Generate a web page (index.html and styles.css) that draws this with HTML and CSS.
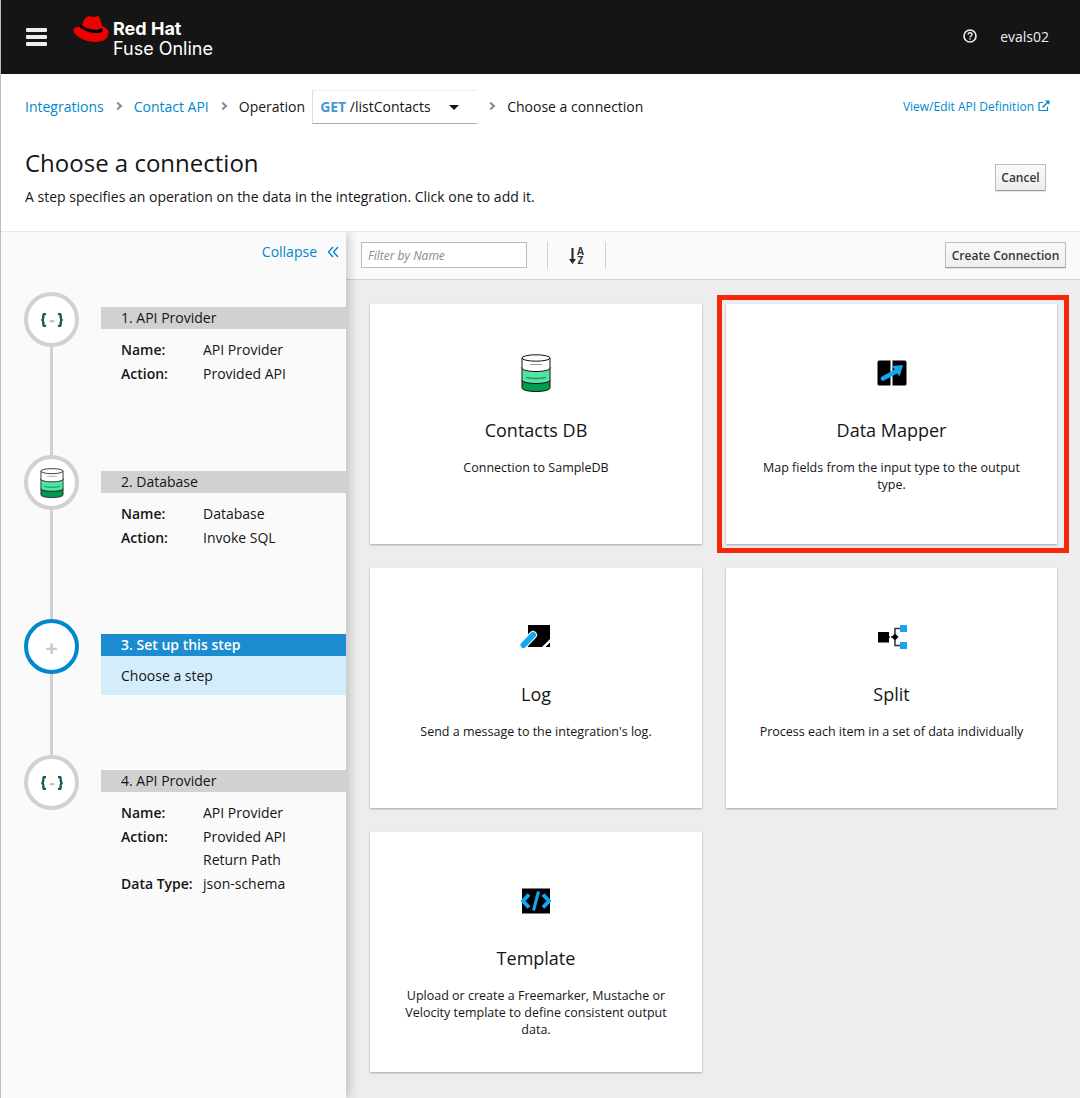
FILE: index.html
```html
<!DOCTYPE html>
<html>
<head>
    <title>Fuse Online</title>
    <link rel="stylesheet" href="styles.css">
</head>
<body>
    <header class="masthead">
        <div class="burger"><span></span><span></span><span></span></div>
        <svg class="hat" viewBox="0 0 36 28" width="36" height="28">
            <path fill="#e00" d="M15 1.500c2-1 4 .5 6 .5s3-1.500 4.500-.8c1.500 .8 2.500 6 3.500 9.800 2.500 1 6.500 3 6.500 6.500 0 4-5 6.500-10 6.500C17 24 6 19 6 14.500c0-.6 .2-1.200 .5-1.700L9.500 9c.8-3 2-6.500 5.500-7.500z"/>
            <path fill="#e00" d="M6.800 11.500C3 12 .5 13 .5 15.500c0 4.500 10 11 20.500 11.500 7 .3 13-2 14.500-7-3 3-8 4-12 3.800C14 23 7 18 6.800 11.500z"/>
            <path fill="#000" d="M8.300 9.800c3 2.500 8 4.500 13 5 3 .3 6-.2 7.500-1.700l1 3.200c-2 1.700-5.500 2-8.500 1.700-6-.5-12-3.200-15-6.200z"/>
        </svg>
        <div class="brand">
            <div class="brand-top">Red Hat</div>
            <div class="brand-bottom">Fuse Online</div>
        </div>
        <div class="masthead-right">
            <svg class="help" viewBox="0 0 14 14" width="14" height="14">
                <circle cx="7" cy="7" r="6" fill="none" stroke="#eee" stroke-width="1.600"/>
                <path d="M5.100 5.500c0-2.400 3.900-2.400 3.900 0 0 1.500-2 1.500-2 3" fill="none" stroke="#eee" stroke-width="1.400"/>
                <rect x="6.300" y="9.300" width="1.400" height="1.400" fill="#eee"/>
            </svg>
            <span class="user">evals02</span>
        </div>
    </header>

    <div class="page-head">
        <div class="crumbs">
            <a class="link">Integrations</a>
            <span class="chev"></span>
            <a class="link">Contact API</a>
            <span class="chev"></span>
            <span class="crumb-text">Operation</span>
            <div class="op-select">
                <span class="op-label"><b>GET</b> /listContacts</span>
                <span class="caret"></span>
            </div>
            <span class="chev"></span>
            <span class="crumb-text">Choose a connection</span>
            <a class="link api-link">View/Edit API Definition
                <svg viewBox="0 0 12 12" width="12" height="12">
                    <path d="M9.500 7v3.500h-8.500v-8h4" fill="none" stroke="#0088ce" stroke-width="1.200"/>
                    <path d="M4.500 7.500L10 2" fill="none" stroke="#0088ce" stroke-width="1.400"/>
                    <path d="M7 .6h4.500v4.500z" fill="#0088ce"/>
                </svg>
            </a>
        </div>
        <div class="title-row">
            <div>
                <h1>Choose a connection</h1>
                <p class="lead">A step specifies an operation on the data in the integration. Click one to add it.</p>
            </div>
            <button class="btn cancel">Cancel</button>
        </div>
    </div>

    <div class="main">
        <aside class="sidebar">
            <div class="collapse">
                <a class="link">Collapse</a>
                <svg viewBox="0 0 12 12" width="12" height="12">
                    <path d="M6 1L1.500 6 6 11M11 1L6.500 6 11 11" fill="none" stroke="#0088ce" stroke-width="1.400"/>
                </svg>
            </div>

            <div class="step step-1">
                <div class="track">
                    <div class="circle">
                        <svg viewBox="0 0 24 14" width="24" height="14">
                            <path class="brace" d="M6 1H4.700C3.600 1 3.300 1.500 3.300 2.500V5c0 1-.5 1.700-1.800 2 1.300 .3 1.800 1 1.800 2v2.500c0 1 .3 1.500 1.400 1.500H6M18 1h1.300c1.100 0 1.400 .5 1.400 1.500V5c0 1 .5 1.700 1.800 2-1.300 .3-1.800 1-1.800 2v2.500c0 1-.3 1.500-1.400 1.500H18"/>
                            <text x="12" y="8.500" class="api-text">api</text>
                        </svg>
                    </div>
                    <div class="line"></div>
                </div>
                <div class="step-body">
                    <div class="step-title">1. API Provider</div>
                    <dl class="props">
                        <dt>Name:</dt><dd>API Provider</dd>
                        <dt>Action:</dt><dd>Provided API</dd>
                    </dl>
                </div>
            </div>

            <div class="step step-2">
                <div class="track">
                    <div class="circle">
                        <svg viewBox="0 0 30 38" width="24" height="30">
                            <use href="#db"/>
                        </svg>
                    </div>
                    <div class="line"></div>
                </div>
                <div class="step-body">
                    <div class="step-title">2. Database</div>
                    <dl class="props">
                        <dt>Name:</dt><dd>Database</dd>
                        <dt>Action:</dt><dd>Invoke SQL</dd>
                    </dl>
                </div>
            </div>

            <div class="step step-3">
                <div class="track">
                    <div class="circle circle-active"><span class="plus">+</span></div>
                    <div class="line"></div>
                </div>
                <div class="step-body">
                    <div class="step-title step-title-active">3. Set up this step</div>
                    <div class="step-hint">Choose a step</div>
                </div>
            </div>

            <div class="step step-4">
                <div class="track">
                    <div class="circle">
                        <svg viewBox="0 0 24 14" width="24" height="14">
                            <path class="brace" d="M6 1H4.700C3.600 1 3.300 1.500 3.300 2.500V5c0 1-.5 1.700-1.800 2 1.300 .3 1.800 1 1.800 2v2.500c0 1 .3 1.500 1.400 1.500H6M18 1h1.300c1.100 0 1.400 .5 1.400 1.500V5c0 1 .5 1.700 1.800 2-1.300 .3-1.800 1-1.800 2v2.500c0 1-.3 1.500-1.400 1.500H18"/>
                            <text x="12" y="8.500" class="api-text">api</text>
                        </svg>
                    </div>
                </div>
                <div class="step-body">
                    <div class="step-title">4. API Provider</div>
                    <dl class="props">
                        <dt>Name:</dt><dd>API Provider</dd>
                        <dt>Action:</dt><dd>Provided API<br>Return Path</dd>
                        <dt>Data Type:</dt><dd>json-schema</dd>
                    </dl>
                </div>
            </div>
        </aside>

        <section class="content">
            <div class="toolbar">
                <input class="filter" type="text" placeholder="Filter by Name">
                <div class="sort">
                    <svg viewBox="0 0 7 16" width="7" height="16">
                        <path d="M3.500 0v12" stroke="#222" stroke-width="2"/>
                        <path d="M0 11h7l-3.500 5z" fill="#222"/>
                    </svg>
                    <span class="az">A<br>Z</span>
                </div>
                <button class="btn create">Create Connection</button>
            </div>
            <div class="cards">
                <div class="card">
                    <svg class="card-icon" viewBox="0 0 30 38" width="30" height="38">
                        <g id="db">
                            <path d="M1 26v8c0 2 6 3.500 14 3.500S29 36 29 34v-8z" fill="#009a50" stroke="#111"/>
                            <path d="M1 13v13c0 2 6 3.500 14 3.500S29 28 29 26V13z" fill="#55e3a5" stroke="#111"/>
                            <path d="M5 23.500c5 1.200 15 1.200 20 0" fill="none" stroke="#0a7a46"/>
                            <path d="M1 4v10c0 2 6 3.500 14 3.500S29 16 29 14V4z" fill="#fff" stroke="#111"/>
                            <ellipse cx="15" cy="4" rx="14" ry="3.200" fill="#fff" stroke="#111"/>
                            <path d="M9 10.500h12" stroke="#999"/>
                        </g>
                    </svg>
                    <h2>Contacts DB</h2>
                    <p>Connection to SampleDB</p>
                </div>
                <div class="card card-marked">
                    <svg class="card-icon" viewBox="0 0 30 26" width="30" height="26">
                        <path d="M.5 2A1.500 1.500 0 0 1 2 .5H13.500V25.500H2A1.500 1.500 0 0 1 .5 24zM15.500 .5H28A1.500 1.500 0 0 1 29.500 2V24A1.500 1.500 0 0 1 28 25.500H15.500z" fill="#000"/>
                        <path d="M6 18.500L19 11.500" stroke="#12a7ef" stroke-width="4.600" stroke-linecap="round"/>
                        <path d="M15 6L26 5 22.500 16.500z" fill="#12a7ef"/>
                    </svg>
                    <h2>Data Mapper</h2>
                    <p>Map fields from the input type to the output type.</p>
                </div>
                <div class="card">
                    <svg class="card-icon" viewBox="0 0 32 26" width="32" height="26">
                        <path d="M8 1H30V23H8z" fill="#000"/>
                        <path d="M22 23L30 15V23z" fill="#fff"/>
                        <path d="M25.500 23L30 18.500V23z" fill="#000"/>
                        <path d="M3.500 21L13 11" stroke="#fff" stroke-width="8" stroke-linecap="round"/>
                        <path d="M3.500 21L13 11" stroke="#12a7ef" stroke-width="6" stroke-linecap="round"/>
                    </svg>
                    <h2>Log</h2>
                    <p>Send a message to the integration's log.</p>
                </div>
                <div class="card">
                    <svg class="card-icon" viewBox="0 0 30 26" width="30" height="26">
                        <rect x="1" y="8" width="11" height="10.500" fill="#000"/>
                        <path d="M12 13h3" stroke="#333" stroke-width="1.400" stroke-dasharray="1 1"/>
                        <path d="M18 9.500l3.500 3.500-3.500 3.500-3.500-3.500z" fill="#000"/>
                        <path d="M18 10V4.500h5M18 16v5.500h5" fill="none" stroke="#333" stroke-width="1.500"/>
                        <rect x="23" y="1" width="7" height="7" fill="#12a7ef"/>
                        <rect x="23" y="18" width="7" height="7" fill="#12a7ef"/>
                    </svg>
                    <h2>Split</h2>
                    <p>Process each item in a set of data individually</p>
                </div>
                <div class="card">
                    <svg class="card-icon" viewBox="0 0 30 26" width="30" height="26">
                        <rect x="1" y="0.500" width="28" height="25" fill="#000"/>
                        <path d="M8 6.500L2 13l6 6.500M22 6.500L28 13l-6 6.500" fill="none" stroke="#12a7ef" stroke-width="4"/>
                        <path d="M17.500 3.500L12.500 22.500" stroke="#12a7ef" stroke-width="3"/>
                    </svg>
                    <h2>Template</h2>
                    <p>Upload or create a Freemarker, Mustache or Velocity template to define consistent output data.</p>
                </div>
            </div>
        </section>
    </div>
</body>
</html>
```

FILE: styles.css
```css
* {
    box-sizing: border-box;
}
html, body {
    height: 100%;
}
body {
    margin: 0;
    font-family: "Open Sans", sans-serif;
    font-size: 14px;
    color: #151515;
    background-color: #fff;
    border-left: 1px solid #bbb;
    display: flex;
    flex-direction: column;
    overflow: hidden;
}
.link {
    color: #0088ce;
}

.masthead {
    height: 74px;
    background-color: #151515;
    display: flex;
    align-items: center;
    padding-left: 25px;
    flex-shrink: 0;
}
.burger {
    width: 21px;
    margin-right: 26px;
    margin-top: 2px;
}
.burger span {
    display: block;
    height: 4px;
    margin-bottom: 3px;
    background-color: #eee;
    border-radius: 1px;
}
.hat {
    margin-right: 4px;
    margin-top: -16px;
}
.brand {
    color: #fff;
    margin-top: 4px;
}
.brand-top {
    font-family: Inter, sans-serif;
    font-size: 18px;
    font-weight: 700;
    line-height: 20px;
    letter-spacing: 0;
}
.brand-bottom {
    font-family: Inter, sans-serif;
    font-size: 18px;
    line-height: 20px;
    letter-spacing: 0;
}
.masthead-right {
    margin-left: auto;
    display: flex;
    align-items: center;
    padding-right: 31px;
    padding-bottom: 2px;
}
.help {
    margin-right: 23px;
}
.user {
    font-size: 14px;
    color: #eee;
}

.page-head {
    height: 158px;
    padding: 15px 30px 0 24px;
    flex-shrink: 0;
    border-bottom: 1px solid #e8e8e8;
}
.crumbs {
    display: flex;
    align-items: center;
    height: 34px;
}
.chev {
    width: 6px;
    height: 6px;
    border-top: 2px solid #8a8d90;
    border-right: 2px solid #8a8d90;
    transform: rotate(45deg);
    margin: 0 13px 0 11px;
}
.crumb-text {
    white-space: nowrap;
}
.op-select {
    width: 165px;
    height: 34px;
    margin: 1px 0 0 7px;
    padding: 0 18px 0 7px;
    display: flex;
    align-items: center;
    justify-content: space-between;
    border-left: 1px solid #ddd;
    border-top: 1px solid #eee;
    border-bottom: 1px solid #aaa;
}
.op-label b {
    color: #4a96d2;
    font-weight: 700;
}
.caret {
    margin-top: 1px;
    border-left: 5px solid transparent;
    border-right: 5px solid transparent;
    border-top: 5px solid #151515;
}
.api-link {
    margin-left: auto;
    font-size: 12px;
    display: flex;
    align-items: center;
    gap: 4px;
}
.title-row {
    display: flex;
    justify-content: space-between;
    align-items: flex-start;
    margin-top: 24px;
}
h1 {
    margin: 0;
    font-size: 24px;
    font-weight: 400;
    line-height: 32px;
}
.lead {
    margin: 8px 0 0;
    font-size: 14px;
    line-height: 19px;
}
.btn {
    font-family: "Open Sans", sans-serif;
    font-size: 12px;
    font-weight: 600;
    white-space: nowrap;
    color: #363636;
    padding: 0;
    background: linear-gradient(#fafafa, #ededed);
    border: 1px solid #bbb;
    border-bottom-color: #999;
    border-radius: 1px;
    box-shadow: 0 1px 1px rgba(0, 0, 0, 0.1);
}
.cancel {
    width: 51px;
    height: 27px;
    margin: 17px 4px 0 0;
}

.main {
    flex: 1;
    display: flex;
    min-height: 0;
}
.sidebar {
    width: 345px;
    flex-shrink: 0;
    background-color: #fafafa;
    position: relative;
    box-shadow: 3px 0 10px rgba(0, 0, 0, 0.2);
    clip-path: inset(0 -20px 0 0);
}
.collapse {
    height: 60px;
    padding: 10px 7px 0 0;
    display: flex;
    justify-content: flex-end;
    line-height: 20px;
}
.collapse svg {
    margin: 4px 0 0 10px;
}
.step {
    display: flex;
}
.step-1 {
    height: 163px;
}
.step-2 {
    height: 164px;
}
.step-3 {
    height: 136px;
}
.track {
    width: 100px;
    padding-left: 23px;
    display: flex;
    flex-direction: column;
    flex-shrink: 0;
}
.circle {
    width: 55px;
    height: 55px;
    flex-shrink: 0;
    border: 4px solid #d1d1d1;
    border-radius: 50%;
    background-color: #fff;
    display: flex;
    align-items: center;
    justify-content: center;
}
.circle-active {
    border-color: #0088ce;
}
.plus {
    color: #c8c8c8;
    font-size: 22px;
    font-weight: 700;
    line-height: 22px;
}
.line {
    flex: 1;
    width: 3px;
    margin-left: 26px;
    background-color: #d1d1d1;
}
.brace {
    fill: none;
    stroke: #0f5e5e;
    stroke-width: 2.300;
}
.api-text {
    font-size: 3.500px;
    fill: #555;
    text-anchor: middle;
}
.step-body {
    flex: 1;
    padding-top: 15px;
}
.step-2 .step-body {
    padding-top: 16px;
}
.step-title {
    height: 22px;
    padding-left: 20px;
    line-height: 22px;
    background-color: #d1d1d1;
}
.step-title-active {
    background-color: #1a8ccf;
    color: #fff;
    font-weight: 600;
}
.step-hint {
    height: 39px;
    padding-left: 20px;
    line-height: 39px;
    background-color: #d4edfa;
}
.props {
    margin: 9px 0 0 20px;
    display: grid;
    grid-template-columns: 82px 1fr;
    line-height: 23.500px;
}
.props dt {
    font-weight: 600;
}
.props dd {
    margin: 0;
}

.content {
    flex: 1;
    min-width: 0;
    background-color: #ededed;
}
.toolbar {
    height: 48px;
    padding: 10px 14px 0 15px;
    display: flex;
    align-items: flex-start;
    background-color: #fafafa;
    border-bottom: 1px solid #d1d1d1;
}
.filter {
    width: 166px;
    height: 26px;
    padding: 0 6px;
    font-family: "Open Sans", sans-serif;
    font-size: 12px;
    border: 1px solid #bbb;
}
.filter::placeholder {
    font-style: italic;
    color: #8a8a8a;
}
.sort {
    width: 59px;
    height: 27px;
    margin-left: 20px;
    display: flex;
    align-items: center;
    justify-content: center;
    gap: 1px;
    border-left: 1px solid #d1d1d1;
    border-right: 1px solid #d1d1d1;
}
.az {
    font-size: 10px;
    font-weight: 700;
    line-height: 9px;
    color: #333;
    text-align: center;
}
.create {
    margin-left: auto;
    width: 121px;
    height: 26px;
}
.cards {
    display: grid;
    grid-template-columns: 332px 331px;
    grid-auto-rows: 240px;
    gap: 24px;
    padding: 24px 0 0 24px;
}
.card {
    background-color: #fff;
    box-shadow: 0 1px 2px rgba(0, 0, 0, 0.3);
    text-align: center;
    display: flex;
    flex-direction: column;
    align-items: center;
    padding: 50px 30px 0;
}
.card-marked {
    position: relative;
}
.card-marked::after {
    content: "";
    position: absolute;
    inset: -9px -12px -9px -9px;
    border: 5px solid #f5260a;
}
.card-icon {
    height: 38px;
    flex-shrink: 0;
}
.card h2 {
    margin: 26px 0 0;
    font-size: 18px;
    font-weight: 400;
    line-height: 25px;
}
.card p {
    margin: 16px 0 0;
    font-size: 12.500px;
    line-height: 17px;
}
```
